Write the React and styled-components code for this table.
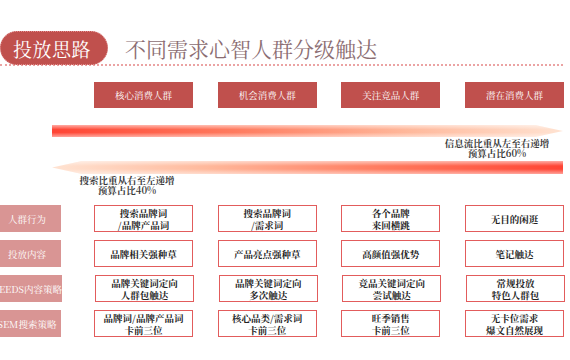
import React from "react";
import styled, { createGlobalStyle } from "styled-components";

const GlobalStyle = createGlobalStyle`
  html, body {
    margin: 0;
    padding: 0;
    background: #ffffff;
  }
  body {
    width: 570px;
    height: 360px;
    overflow: hidden;
    font-family: "Noto Serif CJK SC", "Source Han Serif SC", "Liberation Serif", "Noto Sans CJK SC", serif;
  }
`;

const Page = styled.div`
  width: 570px;
  height: 360px;
  overflow: hidden;
  background: #ffffff;
`;

const Header = styled.header`
  display: flex;
  align-items: center;
  margin-top: 31px;
  width: 563px;
  height: 33px;
  border-bottom: 2px dotted #eba3a3;
`;

const Pill = styled.div`
  width: 108px;
  height: 34px;
  box-sizing: border-box;
  margin-bottom: -1px;
  padding-right: 4px;
  border-radius: 17px;
  border: 1px dotted #e38d8d;
  background: #c0504d;
  color: #ffffff;
  font-size: 19px;
  letter-spacing: 0.5px;
  display: flex;
  align-items: center;
  justify-content: center;
`;

const Title = styled.h1`
  margin: 0 0 0 17px;
  font-size: 21px;
  font-weight: 400;
  color: #8b6d72;
  letter-spacing: 0;
`;

const Columns = styled.div`
  display: grid;
  grid-template-columns: repeat(4, 99px);
  column-gap: 24.67px;
`;

const HeadRow = styled(Columns)`
  margin-top: 16px;
  padding-left: 94px;
  height: 26px;
`;

const ColHead = styled.div`
  background: #c0504d;
  color: #ffffff;
  font-size: 9.5px;
  display: flex;
  align-items: center;
  justify-content: center;
  white-space: nowrap;
`;

const ArrowBlock = styled.section`
  display: flex;
  flex-direction: column;
  margin-left: 52px;
  width: 511px;
  margin-top: 17px;
`;

const edgeGlow = `linear-gradient(to bottom, rgba(255,255,255,0.55) 0%, rgba(255,255,255,0) 38%, rgba(255,255,255,0) 62%, rgba(255,255,255,0.5) 100%)`;

const Arrow = styled.div`
  height: ${(p) => p.$h}px;
  margin-top: ${(p) => p.$top || 0}px;
  background: ${edgeGlow},
    linear-gradient(
      ${(p) => (p.$dir === "right" ? "to right" : "to left")},
      #ff4434 0%,
      #ff7a5e 35%,
      #ffb99c 70%,
      #ffe3d2 100%
    );
  clip-path: ${(p) =>
    p.$dir === "right"
      ? "polygon(0 0, calc(100% - 28px) 0, 100% 50%, calc(100% - 28px) 100%, 0 100%)"
      : "polygon(30px 0, 100% 0, 100% 100%, 30px 100%, 0 50%)"};
`;

const Caption = styled.div`
  width: 130px;
  text-align: center;
  font-size: 9.5px;
  font-weight: 700;
  color: #3a3a3a;
  white-space: nowrap;
  align-self: ${(p) => (p.$side === "right" ? "flex-end" : "flex-start")};
  margin-top: ${(p) => p.$top}px;
  margin-right: ${(p) => (p.$side === "right" ? 1 : 0)}px;
  margin-left: ${(p) => (p.$side === "left" ? 10 : 0)}px;
`;

const Line = styled.span`
  display: block;
  height: ${(p) => p.$lh}px;
  line-height: ${(p) => p.$lh}px;
`;

const Table = styled.section`
  display: flex;
  flex-direction: column;
  gap: 8px;
  margin-top: 10px;
`;

const Row = styled.div`
  display: flex;
  height: 27px;
`;

const Label = styled.div`
  flex: 0 0 68px;
  margin-left: -7px;
  background: #d99594;
  color: #ffffff;
  font-size: 9.5px;
  display: flex;
  align-items: center;
  justify-content: center;
  white-space: nowrap;
`;

const Cells = styled(Columns)`
  margin-left: 33px;
`;

const Cell = styled.div`
  box-sizing: border-box;
  border: 1.5px solid #e25c5c;
  background: #ffffff;
  color: #222222;
  font-size: 9.5px;
  font-weight: 700;
  text-align: center;
  display: flex;
  flex-direction: column;
  align-items: center;
  justify-content: center;
  white-space: nowrap;
`;

const heads = ["核心消费人群", "机会消费人群", "关注竞品人群", "潜在消费人群"];

const rows = [
  {
    label: "人群行为",
    cells: [
      ["搜索品牌词", "/品牌产品词"],
      ["搜索品牌词", "/需求词"],
      ["各个品牌", "来回横跳"],
      ["无目的闲逛"],
    ],
  },
  {
    label: "投放内容",
    cells: [["品牌相关强种草"], ["产品亮点强种草"], ["高颜值强优势"], ["笔记触达"]],
  },
  {
    label: "FEEDS内容策略",
    cells: [
      ["品牌关键词定向", "人群包触达"],
      ["品牌关键词定向", "多次触达"],
      ["竞品关键词定向", "尝试触达"],
      ["常规投放", "特色人群包"],
    ],
  },
  {
    label: "SEM搜索策略",
    cells: [
      ["品牌词/品牌产品词", "卡前三位"],
      ["核心品类/需求词", "卡前三位"],
      ["旺季销售", "卡前三位"],
      ["无卡位需求", "爆文自然展现"],
    ],
  },
];

export default function App() {
  return (
    <Page>
      <GlobalStyle />
      <Header>
        <Pill>投放思路</Pill>
        <Title>不同需求心智人群分级触达</Title>
      </Header>

      <HeadRow>
        {heads.map((h) => (
          <ColHead key={h}>{h}</ColHead>
        ))}
      </HeadRow>

      <ArrowBlock>
        <Arrow $dir="right" $h={12} />
        <Caption $side="right" $top={1}>
          <Line $lh={10}>信息流比重从左至右递增</Line>
          <Line $lh={10}>预算占比60%</Line>
        </Caption>
        <Arrow $dir="left" $h={13} $top={3} />
        <Caption $side="left" $top={1}>
          <Line $lh={10}>搜索比重从右至左递增</Line>
          <Line $lh={10}>预算占比40%</Line>
        </Caption>
      </ArrowBlock>

      <Table>
        {rows.map((r) => (
          <Row key={r.label}>
            <Label>{r.label}</Label>
            <Cells>
              {r.cells.map((lines, i) => (
                <Cell key={i}>
                  {lines.map((l) => (
                    <Line key={l} $lh={12}>
                      {l}
                    </Line>
                  ))}
                </Cell>
              ))}
            </Cells>
          </Row>
        ))}
      </Table>
    </Page>
  );
}
